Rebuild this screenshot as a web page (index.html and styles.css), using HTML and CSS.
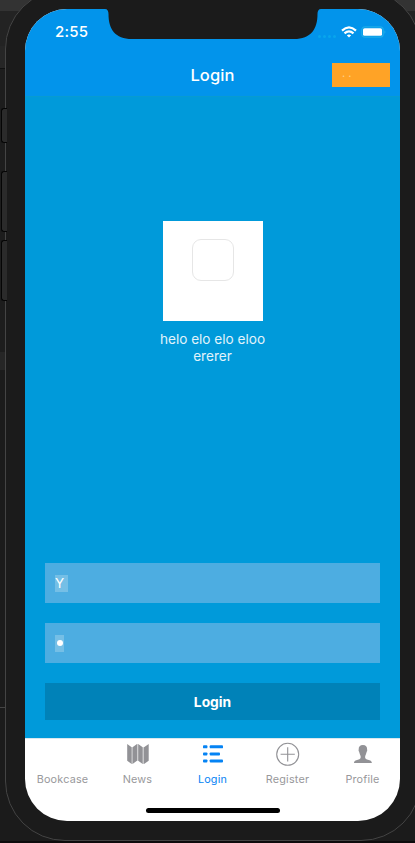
FILE: index.html
```html
<!DOCTYPE html>
<html lang="en">
<head>
<meta charset="utf-8">
<title>Login</title>
<link rel="stylesheet" href="styles.css">
</head>
<body>
<div class="desktop">
  <div class="phone">
    <i class="side mute"></i><i class="side up"></i><i class="side down"></i>
    <div class="screen">
      <svg class="notch" width="216" height="31" viewBox="0 0 216 31"><path d="M0 0C2.500 0 3.500 2 3.500 5C3.500 20 10 30 27 30H189C206 30 212.500 20 212.500 5C212.500 2 213.500 0 216 0Z" fill="#1b1b1b"/></svg>
      <header class="top">
        <div class="status">
          <span class="time">2:55</span>
          <span class="dots"><i></i><i></i><i></i><i></i></span>
          <svg class="wifi" width="16" height="12" viewBox="0 0 16 12" fill="none" stroke="#fff" stroke-width="2.200"><path d="M1 4.600Q8-1.800 15 4.600"/><path d="M3.500 7.400Q8 3.200 12.500 7.400"/><path d="M8 11.600L5.800 9.300Q8 7.500 10.200 9.300Z" fill="#fff" stroke="none"/></svg>
          <svg class="battery" width="26" height="12" viewBox="0 0 26 12"><rect x=".8" y=".8" width="21.400" height="10.400" rx="3" fill="none" stroke="#1cace9" stroke-width="1.200"/><rect x="2" y="2.200" width="19" height="7.600" rx="1.600" fill="#fff"/><path d="M23.300 4.200Q25.700 6 23.300 7.800Z" fill="#1cace9"/></svg>
        </div>
        <div class="navbar">
          <h1>Login</h1>
          <div class="action">. .</div>
        </div>
      </header>
      <main>
        <div class="brand">
          <div class="logo"><div class="placeholder"></div></div>
          <p>helo elo elo eloo ererer</p>
        </div>
        <form>
          <div class="field"><span class="selected name">Y</span></div>
          <div class="field"><span class="selected secret"><i></i></span></div>
          <button type="button">Login</button>
        </form>
      </main>
      <nav>
        <div class="tab"><span class="icon"></span><span>Bookcase</span></div>
        <div class="tab"><span class="icon"><svg width="24" height="24" viewBox="0 0 24 24" fill="#929296"><path d="M1.200 2L5.700 5.200V22L1.200 18.800ZM6.500 5.200L11 2V18.800L6.500 22ZM12.200 2L16.700 5.200V22L12.200 18.800ZM18 5.200L22.700 2V18.800L18 22Z"/><path d="M11 2h1.200v16.800H11zM5.700 5.200h.8V22h-.8z" opacity=".45"/><path d="M16.700 5.200H18V22h-1.300z" opacity=".5"/></svg></span><span>News</span></div>
        <div class="tab active"><span class="icon"><svg width="24" height="24" viewBox="0 0 24 24" fill="#0583f4"><rect x="2" y="3.300" width="4.400" height="3" rx=".9"/><rect x="2" y="10.400" width="4.400" height="3" rx=".9"/><rect x="2" y="17.400" width="4.400" height="3" rx=".9"/><rect x="8.700" y="3.300" width="13.300" height="3" rx=".9"/><rect x="8.700" y="10.400" width="10.300" height="3" rx=".9"/><rect x="8.700" y="17.400" width="13.300" height="3" rx=".9"/></svg></span><span>Login</span></div>
        <div class="tab"><span class="icon"><svg width="24" height="24" viewBox="0 0 24 24" fill="none" stroke="#929296"><circle cx="11.700" cy="12.300" r="11" stroke-width="1.100"/><path d="M11.700 5.200V19.400M4.600 12.300H18.800" stroke-width="1.100"/></svg></span><span>Register</span></div>
        <div class="tab"><span class="icon"><svg width="24" height="24" viewBox="0 0 24 24" fill="#929296"><path transform="translate(-.6 0)" d="M12.500 3C9.600 3 8.200 4.700 8.300 7.300C8.300 8 8 8.300 8.300 9.100C8.500 9.700 8.900 10.100 9 10.700C9.200 12 9.900 13 10.200 14C10.600 16.500 9.900 17.100 7.500 17.700C5 18.300 3.700 18.900 3.500 21H21.500C21.300 18.900 20 18.300 17.500 17.700C15.100 17.100 14.400 16.500 14.800 14C15.100 13 15.800 12 16 10.700C16.100 10.100 16.500 9.700 16.700 9.100C17 8.300 16.700 8 16.700 7.300C16.800 4.700 15.400 3 12.500 3Z"/></svg></span><span>Profile</span></div>
      </nav>
      <div class="home"><i></i></div>
    </div>
  </div>
</div>
</body>
</html>
```
FILE: styles.css
```css
* { box-sizing: border-box; }
body {
  margin: 0;
  width: 415px;
  height: 843px;
  overflow: hidden;
  font-family: Inter, "Liberation Sans", sans-serif;
}
.desktop {
  display: flex;
  width: 415px;
  height: 843px;
  overflow: hidden;
  background:
    linear-gradient(#444, #444) 0 707px / 6px 1px no-repeat,
    linear-gradient(#0d0b0c, #0d0b0c) 0 841px / 415px 2px no-repeat,
    linear-gradient(#333 0 11px, #232323 11px 46px, #262626 46px 68px, #101010 68px 69px, #1d1d1d 69px 352px, #262626 352px 370px, #1b1b1b 370px);
}
.phone {
  position: relative;
  flex: none;
  width: 416px;
  height: 852px;
  margin: -11px 0 0 5px;
  padding: 19px;
  border: 1px solid #444;
  border-radius: 60px;
  background: #1b1b1b;
}
.side {
  position: absolute;
  left: -5px;
  width: 6px;
  border: 1px solid #050505;
  border-right: 0;
  border-radius: 3px 0 0 3px;
  background: #2b2b2b;
}
.mute { top: 118px; height: 35px; }
.up { top: 181px; height: 61px; }
.down { top: 250px; height: 61px; }
.screen {
  position: relative;
  display: flex;
  flex-direction: column;
  width: 375px;
  height: 812px;
  border-radius: 42px;
  overflow: hidden;
  background: #fff;
}
.notch { position: absolute; left: 80px; top: 0; }
.top {
  height: 88px;
  background: #0294eb;
  border-bottom: 1px solid #089bd0;
  color: #fff;
}
.status {
  display: flex;
  align-items: center;
  height: 44px;
  padding: 2px 13px 0 30px;
}
.time { margin-top: -1px; font-size: 15px; font-weight: 500; letter-spacing: .2px; }
.dots { display: flex; gap: 2px; margin: 8px 5px 0 auto; }
.dots i { width: 3px; height: 3px; border-radius: 50%; background: #08a6ec; }
.wifi { margin-right: 4px; }
.navbar {
  display: grid;
  grid-template-columns: 1fr auto 1fr;
  align-items: center;
  height: 43px;
  padding: 0 10px;
}
h1 {
  grid-column: 2;
  margin: 0;
  font-size: 16.500px;
  font-weight: 500;
  letter-spacing: .1px;
  line-height: 20px;
}
.action {
  justify-self: end;
  width: 58px;
  height: 24px;
  padding-left: 10px;
  background: #ffa326;
  color: #ffd08a;
  font-size: 11px;
  line-height: 20px;
}
main {
  display: flex;
  flex-direction: column;
  justify-content: space-between;
  height: 641px;
  padding: 124px 20px 18px;
  background: #009ada;
}
.brand { display: flex; flex-direction: column; align-items: center; }
.logo {
  display: flex;
  justify-content: center;
  width: 100px;
  height: 100px;
  padding-top: 18px;
  background: #fff;
}
.placeholder {
  width: 42px;
  height: 42px;
  border: 1px solid #e6e6e6;
  border-radius: 9px;
}
p {
  width: 125px;
  margin: 10px 0 0;
  color: #e1f3fb;
  font-size: 13.600px;
  line-height: 17px;
  text-align: center;
}
form { display: flex; flex-direction: column; gap: 20px; }
.field {
  display: flex;
  align-items: center;
  height: 40px;
  padding-left: 10px;
  background: #4dade1;
}
.selected { display: flex; align-items: center; height: 17px; background: #75bfe6; }
.name { width: 13px; color: #fff; font-size: 13.500px; }
.secret { width: 9px; justify-content: center; }
.secret i { width: 6px; height: 6px; border-radius: 50%; background: #fff; }
button {
  height: 37px;
  padding: 0;
  border: 0;
  background: #0082b8;
  color: #fff;
  font: 700 13.800px Inter, "Liberation Sans", sans-serif;
}
nav { display: flex; height: 49px; border-top: 1px solid #d8e8ef; }
.tab {
  display: flex;
  flex: 1;
  flex-direction: column;
  align-items: center;
  gap: 6px;
  padding-top: 3px;
  color: #98989b;
  font-size: 10.800px;
  letter-spacing: .2px;
  line-height: 16px;
}
.active { color: #0583f4; }
.icon { display: block; flex: none; width: 24px; height: 24px; }
.icon svg { display: block; }
.home { display: flex; justify-content: center; padding-top: 21px; }
.home i { width: 134px; height: 5px; border-radius: 3px; background: #000; }
```
